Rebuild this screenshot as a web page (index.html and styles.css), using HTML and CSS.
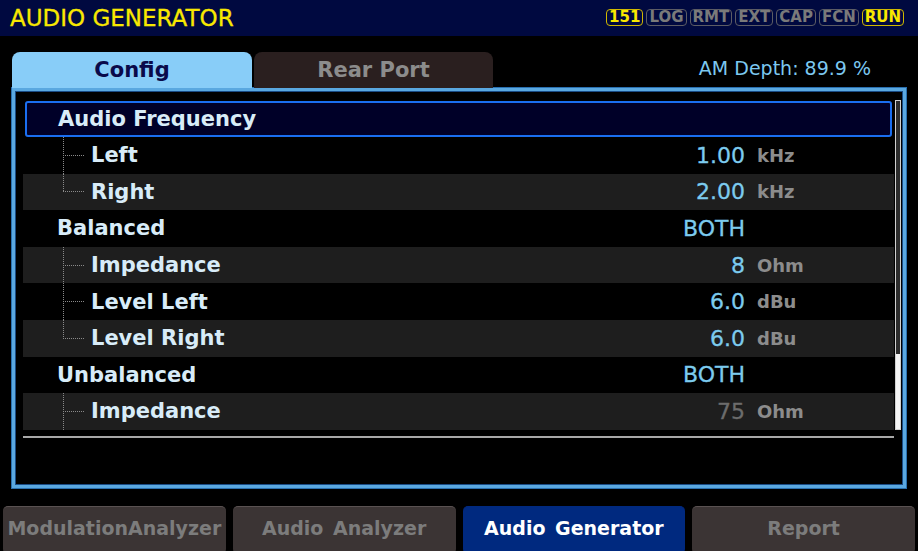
FILE: index.html
```html
<!DOCTYPE html>
<html lang="en">

<head>
  <meta charset="UTF-8">
  <meta name="viewport" content="width=device-width, initial-scale=1.0">
  <title>Audio Generator</title>
  <link rel="stylesheet" href="styles.css">
</head>

<body>
  <header class="topbar">
    <h1>AUDIO GENERATOR</h1>
    <div class="badges">
      <span class="badge on">151</span>
      <span class="badge">LOG</span>
      <span class="badge">RMT</span>
      <span class="badge">EXT</span>
      <span class="badge">CAP</span>
      <span class="badge">FCN</span>
      <span class="badge on">RUN</span>
    </div>
  </header>

  <div class="tabs">
    <div class="tab active">Config</div>
    <div class="tab">Rear Port</div>
    <div class="am-depth">AM Depth: 89.9&nbsp;%</div>
  </div>

  <section class="panel">
    <div class="panel-body">
      <div class="list">
        <div class="row selected">
          <span class="label">Audio Frequency</span>
        </div>
        <div class="row">
          <span class="branch"></span>
          <span class="label">Left</span>
          <span class="val">1.00</span>
          <span class="unit">kHz</span>
        </div>
        <div class="row alt">
          <span class="branch last"></span>
          <span class="label">Right</span>
          <span class="val">2.00</span>
          <span class="unit">kHz</span>
        </div>
        <div class="row">
          <span class="label">Balanced</span>
          <span class="val">BOTH</span>
          <span class="unit"></span>
        </div>
        <div class="row alt">
          <span class="branch"></span>
          <span class="label">Impedance</span>
          <span class="val">8</span>
          <span class="unit">Ohm</span>
        </div>
        <div class="row">
          <span class="branch"></span>
          <span class="label">Level Left</span>
          <span class="val">6.0</span>
          <span class="unit">dBu</span>
        </div>
        <div class="row alt">
          <span class="branch last"></span>
          <span class="label">Level Right</span>
          <span class="val">6.0</span>
          <span class="unit">dBu</span>
        </div>
        <div class="row">
          <span class="label">Unbalanced</span>
          <span class="val">BOTH</span>
          <span class="unit"></span>
        </div>
        <div class="row alt">
          <span class="branch"></span>
          <span class="label">Impedance</span>
          <span class="val disabled">75</span>
          <span class="unit">Ohm</span>
        </div>
      </div>
      <div class="scrollbar">
        <div class="thumb"></div>
      </div>
    </div>
    <div class="separator"></div>
  </section>

  <nav class="buttons">
    <button class="btn">ModulationAnalyzer</button>
    <button class="btn">Audio Analyzer</button>
    <button class="btn active">Audio Generator</button>
    <button class="btn">Report</button>
  </nav>
</body>

</html>
```

FILE: styles.css
```css
body {
  margin: 0;
  width: 918px;
  height: 551px;
  overflow: hidden;
  background: #000;
  font-family: "DejaVu Sans", Verdana, sans-serif;
}

/* top bar */
.topbar {
  height: 36px;
  background: #000940;
  display: flex;
  align-items: center;
  justify-content: space-between;
  padding: 0 14px 0 10px;
}

.topbar h1 {
  margin: 0;
  font-size: 23px;
  font-weight: normal;
  color: #f8e800;
  -webkit-text-stroke: 0.3px #f8e800;
}

.badges {
  display: flex;
  gap: 3px;
  margin-top: -1px;
}

.badge {
  height: 15px;
  line-height: 15px;
  padding: 0 2px;
  border: 1px solid #5c5c64;
  border-radius: 4px;
  font-size: 15px;
  font-weight: bold;
  color: #7a7a7a;
}

.badge.on {
  border-color: #d0b800;
  color: #f8e800;
}

/* tabs */
.tabs {
  display: flex;
  align-items: stretch;
  height: 36px;
  margin: 16px 12px 0;
}

.tab {
  width: 240px;
  display: flex;
  align-items: center;
  justify-content: center;
  border-radius: 8px 8px 0 0;
  background: #2a1f1f;
  color: #8c8c8c;
  font-size: 21px;
  font-weight: bold;
}

.tab + .tab {
  width: 239px;
  margin-left: 2px;
}

.tab.active {
  background: #88cdf8;
  color: #0a0a4a;
}

.am-depth {
  margin-left: auto;
  margin-right: 35px;
  align-self: center;
  margin-top: -4px;
  font-size: 19px;
  color: #7cc8f0;
}

/* main panel */
.panel {
  height: 400px;
  margin: 0 12px;
  box-sizing: border-box;
  border: 3px solid #5aa8e0;
  box-shadow: inset 0 0 0 1px #1a4c86, 0 0 0 1px #2a70b0;
  padding: 9px 1px 0 8px;
}

.panel-body {
  display: flex;
  gap: 1px;
}

.list {
  width: 871px;
  padding-top: 1px;
}

.row {
  height: 36.6px;
  display: flex;
  align-items: center;
  padding-left: 34px;
  box-sizing: border-box;
}

.row.alt {
  background: #1e1e1e;
}

.row.selected {
  height: 36px;
  margin: 0 2px;
  padding-left: 31px;
  border: 2px solid #1a6ef0;
  border-radius: 3px;
  background: #000028;
}

.branch {
  flex: none;
  align-self: stretch;
  width: 21px;
  margin: 0 7px 0 6px;
  background:
    repeating-linear-gradient(to right, #8a8a8a 0 1px, transparent 1px 2px) 0 50% / 100% 1px no-repeat,
    repeating-linear-gradient(to bottom, #8a8a8a 0 1px, transparent 1px 2px) 0 0 / 1px 100% no-repeat;
}

.branch.last {
  background-size: 100% 1px, 1px 50%;
}

.label {
  flex: 1;
  font-size: 21px;
  font-weight: bold;
  color: #d8ecf8;
}

.val {
  font-size: 22px;
  color: #7ccbee;
  text-align: right;
  -webkit-text-stroke: 0.3px currentColor;
}

.val.disabled {
  color: #6c6c6c;
}

.unit {
  width: 137px;
  margin-left: 12px;
  font-size: 18px;
  font-weight: bold;
  color: #8c8c8c;
}

.scrollbar {
  width: 6px;
  height: 330px;
  box-sizing: border-box;
  border: 1px solid #d0d0d0;
  background: #2c2c2c;
  display: flex;
  flex-direction: column;
  justify-content: flex-end;
}

.thumb {
  height: 75px;
  background: #f4f4f4;
}

.separator {
  width: 871px;
  height: 2px;
  margin-top: 6px;
  background: #a8a8a8;
}

/* bottom buttons */
.buttons {
  display: grid;
  grid-template-columns: repeat(4, 1fr);
  gap: 7px;
  margin-top: 18px;
  padding: 0 3px;
}

.btn {
  height: 48px;
  padding: 0 0 6px;
  border: none;
  border-top: 1px solid #5a5252;
  border-radius: 5px;
  background: #3b3434;
  color: #7c7c7c;
  font-family: inherit;
  font-size: 19px;
  font-weight: bold;
  word-spacing: 3px;
}

.btn.active {
  background: #00297f;
  border-top-color: #00297f;
  color: #fff;
}
```
